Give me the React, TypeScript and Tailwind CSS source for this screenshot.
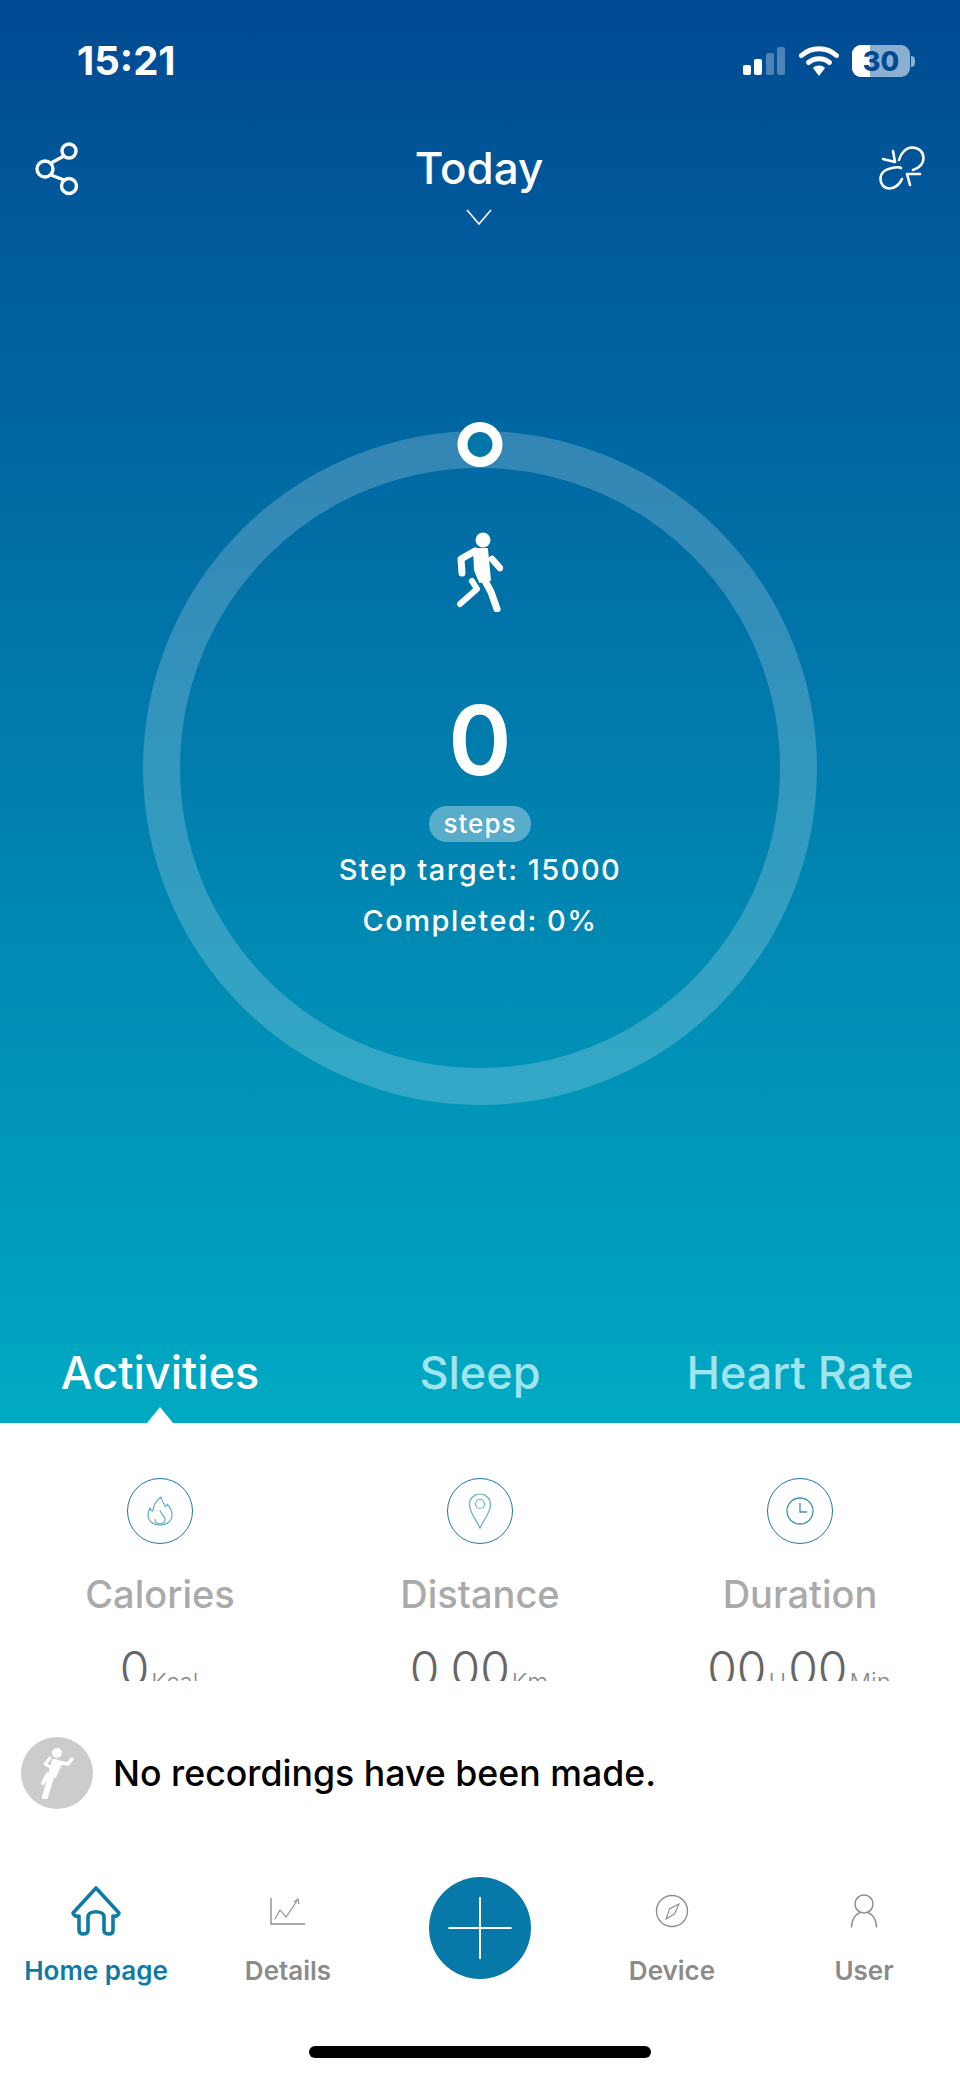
function SignalIcon() {
  return (
    <svg width="44" height="30" viewBox="0 0 44 30" className="block">
      <rect x="1" y="19" width="8" height="10" rx="2" fill="#fff" />
      <rect x="12" y="13" width="8" height="16" rx="2" fill="#fff" />
      <rect x="24" y="7" width="8" height="22" rx="2" fill="#fff" fillOpacity="0.3" />
      <rect x="35" y="1" width="8" height="28" rx="2" fill="#fff" fillOpacity="0.3" />
    </svg>
  )
}

function WifiIcon() {
  return (
    <svg width="40" height="32" viewBox="0 0 40 32" fill="none" className="block">
      <path d="M2.5 10.5C12.5 1.5 27.5 1.5 37.5 10.5" stroke="#fff" strokeWidth="5" strokeLinecap="round" />
      <path d="M9.5 17.5C15.5 12.5 24.5 12.5 30.5 17.5" stroke="#fff" strokeWidth="5" strokeLinecap="round" />
      <path d="M14 23C17.5 19.8 22.5 19.8 26 23L20 31Z" fill="#fff" />
    </svg>
  )
}

function ShareIcon() {
  return (
    <svg width="44" height="54" viewBox="0 0 44 54" fill="none" stroke="#fff" strokeWidth="3.4" className="block">
      <circle cx="10" cy="27" r="8" />
      <circle cx="34" cy="9" r="7" />
      <circle cx="34" cy="44" r="7.5" />
      <path d="M16 21L29 14M16 33L29 38" />
    </svg>
  )
}

function UnlinkIcon() {
  return (
    <svg width="46" height="44" viewBox="0 0 46 44" fill="none" stroke="#fff" strokeWidth="2.6" strokeLinecap="round" strokeLinejoin="round" className="block">
      <path d="M20 14C22 7 27 1.5 33 1.5C40 1.5 44.5 6 44.5 12C44.5 18 40 22 34 24" />
      <path d="M23 33C21 38 16 42.5 10.5 42.5C5 42.5 1.5 38 1.5 33C1.5 27 6 23.5 11 22.5C15 21.5 20 20 22 22" />
      <path d="M4 13L16 16L14 5" />
      <path d="M41 28L28 28L31 39" />
    </svg>
  )
}

function WalkerIcon() {
  return (
    <svg width="46" height="80" viewBox="0 0 46 80" fill="none" stroke="#fff" strokeLinecap="round" strokeLinejoin="round" className="block">
      <circle cx="26" cy="8" r="7.5" fill="#fff" stroke="none" />
      <path d="M17 17L30 17L32 38L33 48L23 50L18 38Z" fill="#fff" strokeWidth="2" />
      <path d="M18 19L4 27L5 41" strokeWidth="7" />
      <path d="M35 27L43 36" strokeWidth="6.5" />
      <path d="M26 45L34 60L40 77" strokeWidth="7" />
      <path d="M15 49L20 57L3 72" strokeWidth="6" />
    </svg>
  )
}

function FlameIcon() {
  return (
    <svg width="26" height="30" viewBox="0 0 26 30" fill="none" stroke="#64aec8" strokeWidth="1.2" strokeLinejoin="round" className="block">
      <path d="M14 1C15 6 17 7 18 10C19 11 20 10 20 8C23 11 25 15 25 19C25 25 20 29 13 29C6 29 1 25 1 19C1 16 2 14 3 12C3.5 14 4.5 15 6 15C6 10 9 5 14 1Z" />
      <path d="M13 14C13 18 18 19 18 23C18 26 16 28 13 28C10 28 8 26 8 23" />
    </svg>
  )
}

function PinIcon() {
  return (
    <svg width="24" height="36" viewBox="0 0 24 36" fill="none" stroke="#64aec8" strokeWidth="1.2" className="block">
      <path d="M12 35C8 26 1.5 20 1.5 11.5C1.5 5.5 6 1 12 1C18 1 22.5 5.5 22.5 11.5C22.5 20 16 26 12 35Z" />
      <circle cx="12" cy="11" r="4.5" />
    </svg>
  )
}

function ClockIcon() {
  return (
    <svg width="28" height="30" viewBox="0 0 28 30" fill="none" stroke="#3f93b4" strokeWidth="1.3" className="block">
      <circle cx="14" cy="15" r="13" />
      <path d="M14 7V16H21" />
    </svg>
  )
}

function RunnerIcon() {
  return (
    <svg width="34" height="52" viewBox="0 0 34 52" fill="none" stroke="#fff" strokeLinecap="round" strokeLinejoin="round" className="block">
      <circle cx="17" cy="6" r="5" fill="#fff" stroke="none" />
      <path d="M15 15L11 30L5 50" strokeWidth="6" />
      <path d="M13 13L22 15L15 30L9 28Z" fill="#fff" strokeWidth="2" />
      <path d="M22 16L28 17L32 12" strokeWidth="3.5" />
      <path d="M10 11L5 17L12 21" strokeWidth="3" />
      <path d="M8 27L3 36" strokeWidth="4" />
    </svg>
  )
}

function HomeIcon() {
  return (
    <svg width="50" height="50" viewBox="0 0 50 50" fill="none" stroke="#0e7ba6" strokeWidth="3.6" strokeLinejoin="round" strokeLinecap="round" className="block">
      <path d="M25 2L48 27C48 29 45 31 42 30V44C42 47 40 48 38 48C35 48 33 47 33 44V31C33 24 17 24 17 31V44C17 47 15 48 12 48C10 48 8 47 8 44V30C5 31 2 29 2 27Z" />
    </svg>
  )
}

function ChartIcon() {
  return (
    <svg width="36" height="28" viewBox="0 0 36 28" fill="none" stroke="#8f8f8f" strokeWidth="1.1" className="block">
      <path d="M1 1V27H35" strokeWidth="1.4" />
      <path d="M5 22L10 13L16 20L27 4" />
      <path d="M24 5L28 2L29 7" />
    </svg>
  )
}

function CompassIcon() {
  return (
    <svg width="34" height="34" viewBox="0 0 34 34" fill="none" stroke="#8f8f8f" strokeWidth="1.4" className="block">
      <circle cx="17" cy="17" r="15.5" />
      <path d="M24 10L19.5 20L11 25L14.5 15Z" strokeWidth="1.1" />
    </svg>
  )
}

function UserIcon() {
  return (
    <svg width="28" height="34" viewBox="0 0 28 34" fill="none" stroke="#8f8f8f" strokeWidth="1.5" strokeLinecap="round" className="block">
      <ellipse cx="14" cy="10" rx="9" ry="9" />
      <path d="M1.5 33C1.5 25 6 20 10 18.5M26.5 33C26.5 25 22 20 18 18.5" />
    </svg>
  )
}

function Stat({ icon, label, children }: { icon: React.ReactNode; label: string; children: React.ReactNode }) {
  return (
    <div className="flex flex-col items-center">
      <div className="flex h-[66px] w-[66px] items-center justify-center rounded-full border border-[#1f7a9c]">{icon}</div>
      <div className="mt-[22px] h-[56px] text-[38px] leading-[56px] font-medium text-[#aaaaaa]">{label}</div>
      <div className="mt-[22px] flex h-[50px] items-baseline text-[48px] leading-[50px] font-light text-[#666666]">{children}</div>
    </div>
  )
}

function Unit({ children }: { children: React.ReactNode }) {
  return <span className="mx-[2px] translate-y-[5px] text-[24px] font-light text-[#888888]">{children}</span>
}

function NavItem({ icon, label, active = false }: { icon: React.ReactNode; label: string; active?: boolean }) {
  return (
    <div className="flex flex-col items-center">
      <div className="flex h-[62px] items-center justify-center">{icon}</div>
      <div className={`mt-[14px] text-[26px] leading-[30px] font-semibold ${active ? 'text-[#0e7ba6]' : 'text-[#8b8b8b]'}`}>{label}</div>
    </div>
  )
}

export default function App() {
  return (
    <div className="flex h-[2078px] w-[960px] flex-col overflow-hidden bg-white font-['Inter',sans-serif]">
      {/* Blue gradient part */}
      <div className="flex h-[1423px] shrink-0 flex-col bg-gradient-to-b from-[#004a93] to-[#00aac3]">
        {/* Status bar */}
        <div className="flex h-[122px] items-center justify-between pr-[45px] pl-[77px]">
          <span className="text-[40px] leading-none font-bold text-white">15:21</span>
          <div className="flex items-center">
            <SignalIcon />
            <div className="ml-[13px]">
              <WifiIcon />
            </div>
            <div className="ml-[13px] flex items-center">
              <div className="relative flex h-[32px] w-[58px] items-center justify-center overflow-hidden rounded-[9px] bg-white/55">
                <div className="absolute inset-y-0 left-0 w-[18px] bg-white" />
                <span className="relative text-[27px] leading-none font-extrabold text-[#004a93]">30</span>
              </div>
              <div className="ml-[1px] h-[11px] w-[4px] rounded-r-full bg-white/55" />
            </div>
          </div>
        </div>

        {/* Title row */}
        <div className="flex h-[110px] items-start justify-between pr-[35px] pl-[35px]">
          <div className="mt-[20px]">
            <ShareIcon />
          </div>
          <div className="flex flex-col items-center">
            <span className="mt-[20px] text-[44px] leading-[52px] font-medium text-white">Today</span>
            <svg width="26" height="16" viewBox="0 0 26 16" fill="none" stroke="#fff" strokeWidth="1.6" className="mt-[15px] block">
              <path d="M1 1L13 15L25 1" />
            </svg>
          </div>
          <div className="mt-[24px]">
            <UnlinkIcon />
          </div>
        </div>

        {/* Step ring */}
        <div className="relative mx-auto mt-[199px] flex h-[674px] w-[674px] flex-col items-center rounded-full border-[37px] border-white/20">
          <div className="absolute top-[-46px] left-1/2 h-[45px] w-[45px] -translate-x-1/2 rounded-full border-[10px] border-white bg-[#0077a7]" />
          <div className="mt-[64px]">
            <WalkerIcon />
          </div>
          <div className="mt-[73px] text-[96px] leading-[110px] font-semibold text-white">0</div>
          <div className="mt-[11px] flex h-[36px] w-[102px] items-center justify-center rounded-full bg-white/35 text-[26px] leading-none font-medium tracking-[1px] text-white">
            steps
          </div>
          <div className="mt-[10px] text-[29px] leading-[36px] font-medium tracking-[1.5px] whitespace-nowrap text-white">Step target: 15000</div>
          <div className="mt-[15px] text-[29px] leading-[36px] font-medium tracking-[1.5px] whitespace-nowrap text-white">Completed: 0%</div>
        </div>

        {/* Tabs */}
        <div className="relative mt-auto grid h-[78px] grid-cols-3 items-start">
          <span className="text-center text-[45px] leading-[56px] font-medium text-white">Activities</span>
          <span className="text-center text-[45px] leading-[56px] font-medium text-[#a0e5ee]">Sleep</span>
          <span className="text-center text-[45px] leading-[56px] font-medium whitespace-nowrap text-[#a0e5ee]">Heart Rate</span>
          <div className="absolute bottom-0 left-[147px] h-0 w-0 border-x-[13px] border-b-[16px] border-x-transparent border-b-white" />
        </div>
      </div>

      <div className="h-[258px] shrink-0 overflow-hidden pt-[55px]">
        <div className="grid grid-cols-3">
          <Stat icon={<FlameIcon />} label="Calories">
            0<Unit>Kcal</Unit>
          </Stat>
          <Stat icon={<PinIcon />} label="Distance">
            0.00<Unit>Km</Unit>
          </Stat>
          <Stat icon={<ClockIcon />} label="Duration">
            00<Unit>H</Unit>00<Unit>Min</Unit>
          </Stat>
        </div>
      </div>

      {/* Recording row */}
      <div className="mt-[56px] flex items-center pl-[21px]">
        <div className="flex h-[72px] w-[72px] items-center justify-center rounded-full bg-[#cccccc]">
          <RunnerIcon />
        </div>
        <span className="ml-[20px] text-[35.7px] leading-[44px] font-medium text-black">No recordings have been made.</span>
      </div>

      {/* Bottom nav */}
      <div className="relative mt-[71px] grid grid-cols-5">
        <NavItem icon={<HomeIcon />} label="Home page" active />
        <NavItem icon={<ChartIcon />} label="Details" />
        <div className="flex justify-center">
          <div className="relative mt-[-3px] h-[102px] w-[102px] rounded-full bg-[#0679a8]">
            <div className="absolute top-1/2 left-1/2 h-[2px] w-[63px] -translate-x-1/2 -translate-y-1/2 bg-white" />
            <div className="absolute top-1/2 left-1/2 h-[62px] w-[2px] -translate-x-1/2 -translate-y-1/2 bg-white" />
          </div>
        </div>
        <NavItem icon={<CompassIcon />} label="Device" />
        <NavItem icon={<UserIcon />} label="User" />
      </div>

      {/* Home indicator */}
      <div className="mx-auto mt-auto mb-[20px] h-[12px] w-[342px] rounded-full bg-black" />
    </div>
  )
}
